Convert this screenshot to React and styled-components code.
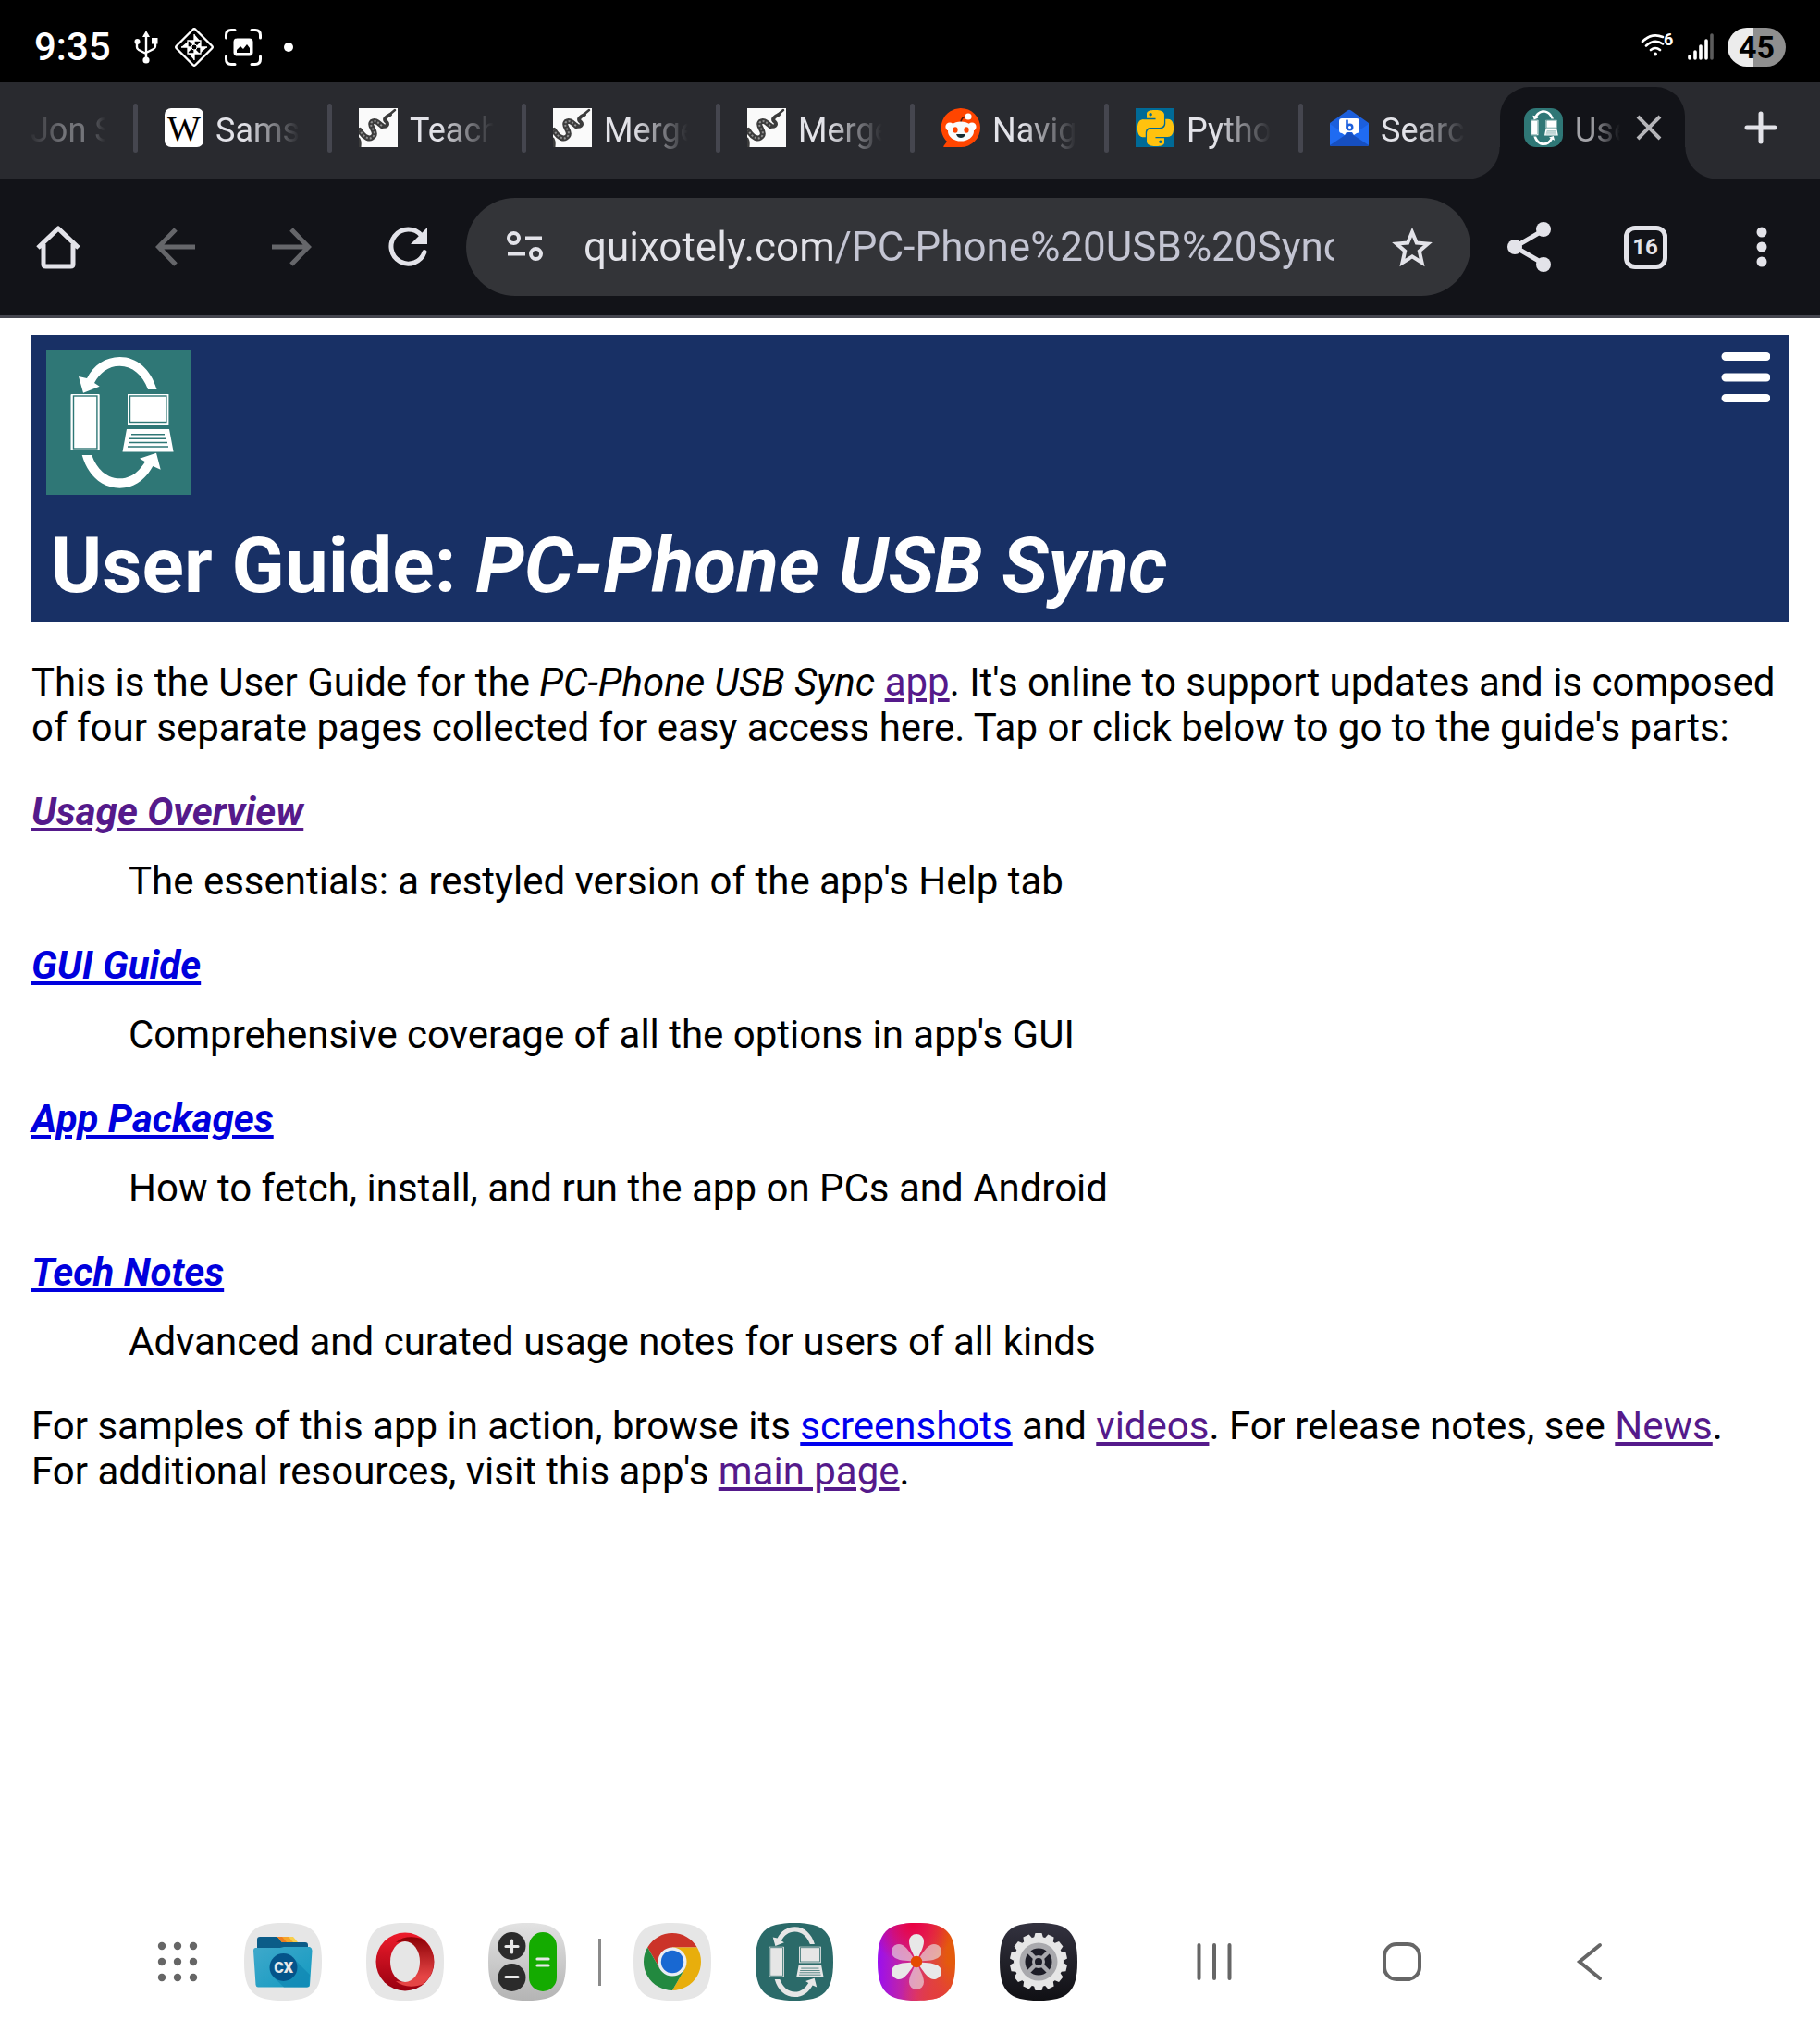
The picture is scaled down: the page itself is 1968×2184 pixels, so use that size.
import React from 'react';
import styled, { createGlobalStyle } from 'styled-components';
import { SiPython } from 'react-icons/si';

const GlobalStyle = createGlobalStyle`
  * {
    box-sizing: border-box;
  }

  body {
    margin: 0;
    background: #ffffff;
    font-family: Roboto, 'Liberation Sans', sans-serif;
  }

  svg {
    display: block;
    flex: none;
  }
`;

const Screen = styled.div`
  min-height: 100vh;
  display: flex;
  flex-direction: column;
`;

const IconButton = styled.button`
  width: ${({ $width }) => $width || 42}px;
  height: ${({ $height }) => $height || 42}px;
  flex: none;
  display: flex;
  align-items: center;
  justify-content: center;
  border: 0;
  padding: 0;
  background: none;
  color: ${({ $color }) => $color || '#e3e3e9'};
  font-family: inherit;
  cursor: pointer;
`;

/* ---------- status bar ---------- */

const StatusBar = styled.header`
  height: 89px;
  padding: 13px 37px 0;
  display: flex;
  align-items: center;
  justify-content: space-between;
  background: #000000;
  color: #ffffff;
`;

const StatusGroup = styled.div`
  display: flex;
  align-items: center;
  gap: ${({ $gap }) => $gap}px;
`;

const Clock = styled.time`
  margin-right: 13px;
  font-size: 42px;
  line-height: 42px;
  font-weight: 500;
`;

const Battery = styled.span`
  width: 63px;
  height: 42px;
  border-radius: 21px;
  background: linear-gradient(90deg, #ececec 45%, #8f8f8f 45%);
  color: #000000;
  font-size: 34px;
  line-height: 42px;
  font-weight: 700;
  text-align: center;
`;

/* ---------- tab strip ---------- */

const TabStrip = styled.nav`
  height: 105px;
  display: flex;
  overflow: hidden;
  background: #292a2f;
`;

const Tabs = styled.div`
  display: flex;
  margin-left: -66px;
`;

const Tab = styled.button`
  width: 210px;
  height: 105px;
  flex: none;
  display: flex;
  align-items: center;
  padding: 0 30px 7px 0;
  border: 0;
  background: none;
  color: #e3e3e9;
  font-family: inherit;
  font-size: 36px;
  line-height: 50px;
  text-align: left;
  opacity: ${({ $faded }) => ($faded ? 0.4 : 1)};

  &::before {
    content: '';
    width: 5px;
    height: 53px;
    margin-right: 29px;
    flex: none;
    border-radius: 3px;
    background: #45464f;
  }
`;

const TabTitle = styled.span`
  flex: 1;
  min-width: 0;
  margin-left: 13px;
  padding: 5px 0 0 ${({ $fadeIn }) => ($fadeIn ? 10 : 0)}px;
  overflow: hidden;
  white-space: nowrap;
  mask-image: linear-gradient(
    90deg,
    ${({ $fadeIn }) =>
      $fadeIn ? 'transparent 8%, #000 50%, #000 80%' : '#000 35%'},
    transparent
  );
`;

const ActiveTab = styled.div`
  position: relative;
  width: 200px;
  height: 100px;
  flex: none;
  display: flex;
  align-items: center;
  margin: 5px 8px 0;
  padding: 0 18px 12px 26px;
  border-radius: 32px 32px 0 0;
  background: #121318;
  color: #a3a3a8;
  font-size: 36px;
  line-height: 50px;

  &::before,
  &::after {
    content: '';
    position: absolute;
    bottom: 0;
    width: 35px;
    height: 35px;
  }

  &::before {
    right: 100%;
    background: radial-gradient(circle at 0 0, transparent 34px, #121318 35px);
  }

  &::after {
    left: 100%;
    background: radial-gradient(circle at 100% 0, transparent 34px, #121318 35px);
  }
`;

const CloseTab = styled(IconButton)`
  margin-left: 10px;
`;

const NewTab = styled(IconButton)`
  margin-left: auto;
  padding-bottom: 7px;
`;

/* ---------- toolbar ---------- */

const Toolbar = styled.div`
  height: 150px;
  display: flex;
  align-items: center;
  padding-bottom: 1px;
  border-bottom: 3px solid #45464f;
  background: #121318;
`;

const Omnibox = styled.form`
  flex: 1;
  min-width: 0;
  height: 106px;
  display: flex;
  align-items: center;
  padding: 0 41px;
  border-radius: 53px;
  background: #333438;
`;

const UrlInput = styled.input`
  flex: 1;
  min-width: 0;
  height: 60px;
  margin: 0 60px 0 40px;
  padding: 0;
  border: 0;
  outline: 0;
  background: linear-gradient(90deg, #e3e3e9 269px, #c4c5d3 269px);
  background-clip: text;
  color: transparent;
  font-family: inherit;
  font-size: 44px;
`;

const TabCount = styled.span`
  width: 47px;
  height: 47px;
  border: 5px solid #e3e3e9;
  border-radius: 12px;
  font-size: 24px;
  line-height: 37px;
  font-weight: 700;
`;

/* ---------- web page ---------- */

const Page = styled.main`
  flex: 1;
  padding: 18px 34px;
  color: #000000;
  font-size: 42px;
  line-height: 49px;
`;

const Banner = styled.header`
  padding: 16px 16px 11px;
  background: #183065;
`;

const BannerTop = styled.div`
  display: flex;
  align-items: flex-start;
  justify-content: space-between;
`;

const Title = styled.h1`
  margin: 28px 0 0 5px;
  color: #ffffff;
  font-size: 84px;
  line-height: 98px;
  font-weight: 700;
`;

const Paragraph = styled.p`
  margin: 41px 0;
`;

const Link = styled.a`
  color: ${({ $visited }) => ($visited ? '#551a8b' : '#0000ee')};
  text-decoration: underline;
`;

const Guide = styled.dl`
  margin: 0 0 42px;
`;

const Part = styled.dt`
  margin-top: 42px;
  font-weight: 700;
  font-style: italic;
`;

const PartLink = styled(Link)`
  color: ${({ $visited }) => ($visited ? '#551a8b' : '#0000dd')};
`;

const PartText = styled.dd`
  margin: 26px 0 0 105px;
`;

/* ---------- dock ---------- */

const Dock = styled.footer`
  height: 126px;
  display: flex;
  align-items: center;
  justify-content: space-between;
  padding: 0 228px 0 168px;
  background: #ffffff;
`;

const DockApps = styled.div`
  display: flex;
  align-items: center;
  gap: 48px;
`;

const DockDivider = styled.span`
  width: 3px;
  height: 51px;
  margin: 0 -13px;
  background: #8a8a8a;
`;

const NavKeys = styled.div`
  display: flex;
  gap: 161px;
`;

/* ---------- drawings ---------- */

const SQUIRCLE = 'M42 0C10 0 0 10 0 42S10 84 42 84 84 74 84 42 74 0 42 0Z';

const SyncLogo = ({ size, shape = 'square', bg = '#2f7776', fg = '#ffffff' }) => (
  <svg width={size} height={size} viewBox="0 0 157 157">
    {shape === 'square' && <rect width="157" height="157" fill={bg} />}
    {shape === 'rounded' && <rect width="157" height="157" rx="48" fill={bg} />}
    {shape === 'squircle' && (
      <path d={SQUIRCLE} transform="scale(1.869)" fill={bg} />
    )}
    <g fill={fg}>
      <path d="M119.5 43C113 21 98 8 79.5 8 64 8 51 17 44 31L35 29 40 46.7 57.7 39.7 52 36C58 25 67 17.7 79.5 17.7 93 17.7 104 27 110 43Z" />
      <path d="M38.7 114C45 136 60 149.7 79.5 149.7 95 149.7 107 141 115.3 126L123.7 129.7 119 111.7 101 117.7 107 121.3C100 132 92 139.3 79.5 139.3 66 139.3 55 130 49.2 114Z" />
      <rect x="26.5" y="48" width="31.2" height="61" rx="1" />
      <rect x="88" y="48" width="44.4" height="33" />
      <path d="M87 86H133L137.6 110.5H82.5Z" />
    </g>
    <g fill="none" stroke={bg} strokeWidth="1.4">
      <rect x="29.5" y="50" width="25.4" height="57" />
      <rect x="90.5" y="50" width="39.4" height="28.5" />
      <path d="M92 91.7H128M90 96.3H130M89 100.5H131M88 105H132" />
    </g>
  </svg>
);

const SnakeIcon = () => (
  <svg width="42" height="42" viewBox="0 0 42 42">
    <rect width="42" height="42" fill="#fafafa" />
    <g fill="none" stroke="#3c3c3c" strokeLinecap="round">
      <path d="M39 2L33 7" strokeWidth="2.5" />
      <path d="M34 7C29 9 26 12 30 15 33 18 29 21 25 19" strokeWidth="4" />
      <path d="M25 19C21 16 18 12 14 15 10 19 20 25 16 30 12 35 6 32 1 24" strokeWidth="6" />
      <path d="M0 33C2 36 1 39 1 42" strokeWidth="3" />
    </g>
    <path
      d="M25 19C21 16 18 12 14 15 10 19 20 25 16 30 12 35 6 32 1 24"
      fill="none"
      stroke="#909090"
      strokeWidth="2"
      strokeDasharray="2 2"
    />
  </svg>
);

const WikiIcon = () => (
  <svg width="42" height="42" viewBox="0 0 42 42">
    <rect width="42" height="42" rx="7" fill="#ffffff" />
    <text
      x="21"
      y="35"
      textAnchor="middle"
      fontFamily="'Liberation Serif', serif"
      fontSize="38"
      fill="#000000"
    >
      W
    </text>
  </svg>
);

const RedditIcon = () => (
  <svg width="42" height="42" viewBox="0 0 42 42">
    <path d="M21 0A21 21 0 1 1 21 42H3C2 42 2 41 3 40L6 36A21 21 0 0 1 21 0Z" fill="#ff4500" />
    <path d="M21 16C21 11 24 9 28 9" fill="none" stroke="#5b1a08" strokeWidth="1.6" />
    <circle cx="29" cy="9" r="3.6" fill="#ffffff" />
    <circle cx="9" cy="20" r="4.6" fill="#ffffff" />
    <circle cx="33" cy="20" r="4.6" fill="#ffffff" />
    <ellipse cx="21" cy="25" rx="14" ry="10.5" fill="#f8fbfc" />
    <ellipse cx="15" cy="23.5" rx="2.6" ry="3.2" fill="#ff4500" />
    <ellipse cx="27" cy="23.5" rx="2.6" ry="3.2" fill="#ff4500" />
    <path d="M16 28H26C25 31 23 32 21 32S17 31 16 28Z" fill="#152c33" />
  </svg>
);

const PythonBox = styled.span`
  width: 42px;
  height: 42px;
  flex: none;
  display: flex;
  align-items: center;
  justify-content: center;
  background: #006a97;
  color: #ffc20e;
`;

const MailIcon = () => (
  <svg width="42" height="42" viewBox="0 0 42 42">
    <path d="M0 16L19 2.5Q21 1 23 2.5L42 16V39Q42 41 40 41H2Q0 41 0 39Z" fill="#1c5fdc" />
    <path d="M0 17L21 31 42 17V39Q42 41 40 41H2Q0 41 0 39Z" fill="#1f6bf2" />
    <path d="M0 40L21 26 42 40Q41 41 40 41H2Q1 41 0 40Z" fill="#164fc0" />
    <path d="M13 11H29Q32 11 32 14V24Q32 27 29 27L26 29 24 26H18L16 29 13 27Q10 27 10 24V14Q10 11 13 11Z" fill="#ffffff" />
    <path d="M18.5 13.5V21" stroke="#1c5fdc" strokeWidth="2.6" strokeLinecap="round" />
    <circle cx="21.5" cy="20.5" r="2.8" fill="none" stroke="#1c5fdc" strokeWidth="2.4" />
  </svg>
);

const UsbIcon = () => (
  <svg width="32" height="36" viewBox="0 0 32 36" fill="none" stroke="#fff" strokeWidth="2.4">
    <path d="M13 6V32M3 12V18Q3 20 5 21L13 25M23 12V17Q23 19 21 20L13 24" />
    <path d="M13 0L17 7H9Z" fill="#fff" stroke="none" />
    <circle cx="3.5" cy="12" r="3" fill="#fff" stroke="none" />
    <rect x="19" y="8" width="6.5" height="6.5" fill="#fff" stroke="none" />
    <circle cx="13" cy="32" r="3.6" fill="#fff" stroke="none" />
  </svg>
);

const DiamondIcon = () => (
  <svg width="42" height="42" viewBox="0 0 42 42">
    <path d="M19.5 2Q21 .5 22.5 2L40 19.5Q41.500 21 40 22.5L22.5 40Q21 41.500 19.5 40L2 22.5Q.5 21 2 19.5Z" fill="none" stroke="#fff" strokeWidth="2.4" />
    <g fill="none" stroke="#fff" strokeWidth="1.3">
      <path d="M21 7V35M7 21H35M14 14H28V28H14Z" />
    </g>
    <path d="M21 7L27 14H21ZM35 21L28 27V21ZM21 35L15 28H21ZM7 21L14 15V21ZM15 14L21 20V14ZM28 15L22 21H28ZM27 28L21 22V28ZM14 27L20 21H14Z" fill="#fff" />
    <circle cx="21" cy="21" r="3" fill="#000" stroke="#fff" strokeWidth="1" />
  </svg>
);

const CaptureIcon = () => (
  <svg width="40" height="40" viewBox="0 0 40 40">
    <path
      d="M1.5 10V7Q1.5 1.5 7 1.5H11M29 1.5H33Q38.5 1.5 38.5 7V10M38.5 30V33Q38.5 38.5 33 38.5H29M11 38.5H7Q1.5 38.5 1.5 33V30"
      fill="none"
      stroke="#fff"
      strokeWidth="3"
      strokeLinecap="round"
    />
    <rect x="9.5" y="10.5" width="21" height="19" rx="4" fill="#fff" />
    <path d="M13 26V23L17 19 20 22 24 17 27 21V26Z" fill="#000" />
  </svg>
);

const MoreDot = () => (
  <svg width="42" height="10" viewBox="0 0 42 10">
    <circle cx="17" cy="5" r="5" fill="#fff" />
  </svg>
);

const WifiIcon = () => (
  <svg width="36" height="30" viewBox="0 0 36 30">
    <g fill="none" stroke="#fff" strokeWidth="2.6" strokeLinecap="round">
      <path d="M2 9Q12 -1 24 4M6 13.5Q15 5.5 24 11.5M11 18Q16 14 21 18" />
    </g>
    <circle cx="16" cy="22.5" r="2" fill="#fff" />
    <text x="25" y="13" fontSize="18" fontWeight="700" fill="#fff">
      6
    </text>
  </svg>
);

const SignalIcon = () => (
  <svg width="28" height="30" viewBox="0 0 28 30" strokeWidth="3.6" strokeLinecap="round">
    <path d="M2 25V27M8 20V27M14 14V27M20 8V27" stroke="#fff" />
    <path d="M26 2V27" stroke="#5c5c5c" />
  </svg>
);

const ToolIcon = ({ name }) => (
  <svg width="54" height="54" viewBox="0 0 54 54" fill="none" stroke="currentColor" strokeWidth="5">
    {name === 'home' && (
      <path d="M5 28L27 7 49 28M11 24V45.5Q11 48 13.5 48H40.5Q43 48 43 45.5V24" strokeLinejoin="round" />
    )}
    {name === 'back' && <path d="M28 8L9.500 27 28 46M9 27H49" />}
    {name === 'forward' && <path d="M27 8L45.5 27 27 46M46 27H6" />}
    {name === 'reload' && (
      <>
        <path d="M41.5 14.5A18.5 18.5 0 1 0 45 32.5" strokeLinecap="round" />
        <path d="M48 6V24H30Z" fill="currentColor" stroke="none" />
      </>
    )}
    {name === 'share' && (
      <>
        <path d="M43 9L12 27 43 45" />
        <g fill="currentColor" stroke="none">
          <circle cx="43" cy="8" r="8" />
          <circle cx="12" cy="27" r="8" />
          <circle cx="43" cy="46" r="8" />
        </g>
      </>
    )}
    {name === 'more' && (
      <g fill="currentColor" stroke="none">
        <circle cx="27" cy="11" r="5.5" />
        <circle cx="27" cy="27" r="5.5" />
        <circle cx="27" cy="43" r="5.5" />
      </g>
    )}
  </svg>
);

const TuneIcon = () => (
  <svg width="46" height="42" viewBox="0 0 46 42" fill="none" stroke="#e3e3e9" strokeWidth="4">
    <circle cx="10.5" cy="11.5" r="5.5" />
    <circle cx="34.5" cy="28.5" r="5.5" />
    <path d="M23 11.5H41M4 28.5H23" />
  </svg>
);

const StarIcon = () => (
  <svg width="46" height="46" viewBox="0 0 46 46">
    <path
      d="M24 7L28.8 18.5 41 19.5 31.8 27.5 34.6 40 24 33.4 13.4 40 16.2 27.5 7 19.5 19.2 18.5Z"
      fill="none"
      stroke="#e3e3e9"
      strokeWidth="4"
    />
  </svg>
);

const CloseIcon = () => (
  <svg width="28" height="28" viewBox="0 0 28 28">
    <path d="M2 2L26 26M26 2L2 26" stroke="#b5b5b9" strokeWidth="4" />
  </svg>
);

const PlusIcon = () => (
  <svg width="36" height="36" viewBox="0 0 36 36">
    <path d="M18 3V33M3 18H33" stroke="#e3e3e9" strokeWidth="5" strokeLinecap="round" />
  </svg>
);

const MenuIcon = () => (
  <svg width="54" height="54" viewBox="0 0 54 54">
    <path d="M6 4.5H50M6 27H50M6 49.5H50" stroke="#fff" strokeWidth="9" strokeLinecap="round" />
  </svg>
);

const FilesApp = () => (
  <svg width="84" height="84" viewBox="0 0 84 84">
    <defs>
      <linearGradient id="folder" x1="0" y1="0" x2="1" y2="1">
        <stop offset="0" stopColor="#3fa9cb" />
        <stop offset="1" stopColor="#1399c0" />
      </linearGradient>
    </defs>
    <path d={SQUIRCLE} fill="#e6e6e6" />
    <path d="M17 15H38L43 21H66Q69 21 69 24V32H14V18Q14 15 17 15Z" fill="#0b5c88" />
    <path d="M36 15H53L58 21H41Z" fill="#f8cf4c" />
    <path d="M36 15H48L53 21H41Z" fill="#f6a52a" />
    <path d="M36 15H41L46 21H41Z" fill="#ee7d20" />
    <path d="M12.5 27H39L43 26H71Q73.5 27 73.5 30L71 67Q71 69.5 68 69.5H15Q13 69.5 12.5 67L10 30Q10 27 12.5 27Z" fill="url(#folder)" />
    <path d="M53 38L71 56 70 67Q70 69.5 68 69.5H43L32 59Z" fill="#0f86b2" opacity="0.7" />
    <circle cx="42.5" cy="48" r="15" fill="#04548a" />
    <text x="42.5" y="54" textAnchor="middle" fontSize="16" fontWeight="900" fill="#e8e8e8">
      CX
    </text>
  </svg>
);

const OperaApp = () => (
  <svg width="84" height="84" viewBox="0 0 84 84">
    <defs>
      <linearGradient id="operaOuter" x1="0" y1="0" x2="0" y2="1">
        <stop offset="0" stopColor="#ee1c2c" />
        <stop offset="1" stopColor="#980010" />
      </linearGradient>
      <linearGradient id="operaInner" x1="0" y1="0" x2="0" y2="1">
        <stop offset="0" stopColor="#8c0005" />
        <stop offset="0.8" stopColor="#e54545" />
      </linearGradient>
    </defs>
    <path d={SQUIRCLE} fill="#e6e6e6" />
    <circle cx="42" cy="42" r="31.5" fill="url(#operaOuter)" />
    <path d="M32 21C40 14 52 14 62 18A31.5 31.5 0 0 1 62 66C52 70 40 70 32 63L42 64V20Z" fill="url(#operaInner)" />
    <ellipse cx="42" cy="42" rx="16" ry="22" fill="#e6e6e6" />
  </svg>
);

const CalculatorApp = () => (
  <svg width="84" height="84" viewBox="0 0 84 84">
    <defs>
      <linearGradient id="calc" x1="0" y1="0" x2="0" y2="1">
        <stop offset="0" stopColor="#e2e2e2" />
        <stop offset="1" stopColor="#b4b4b4" />
      </linearGradient>
    </defs>
    <path d={SQUIRCLE} fill="url(#calc)" />
    <circle cx="25.5" cy="25" r="15" fill="#2b2b2b" />
    <circle cx="25.5" cy="59" r="15" fill="#2b2b2b" />
    <rect x="44" y="10" width="30" height="64" rx="15" fill="#14ab00" />
    <path
      d="M19 25.5H32M25.5 19V32M19 58.5H32M53 39H65M53 46H65"
      stroke="#e8e8e8"
      strokeWidth="3.2"
      strokeLinecap="round"
    />
  </svg>
);

const ChromeApp = () => (
  <svg width="84" height="84" viewBox="0 0 84 84">
    <path d={SQUIRCLE} fill="#e6e6e6" />
    <g transform="translate(42 42)">
      <path d="M-26.85 -15.5A31 31 0 0 1 26.85 -15.5H0L-13.4 7.75Z" fill="#cb3328" />
      <path d="M26.85 -15.5A31 31 0 0 1 0 31L13.4 7.75 0 -15.5Z" fill="#e8ae0c" />
      <path d="M0 31A31 31 0 0 1 -26.85 -15.5L-13.4 7.75 13.4 7.75Z" fill="#22893f" />
      <circle r="15.5" fill="#e9edf2" />
      <circle r="12.2" fill="#1868d2" />
    </g>
  </svg>
);

const PETAL = 'M0 0C-3 -8 -8 -15 -8 -22A8 8 0 0 1 8 -22C8 -15 3 -8 0 0Z';

const GalleryApp = () => (
  <svg width="84" height="84" viewBox="0 0 84 84">
    <defs>
      <linearGradient id="petalBack" x1="0" y1="0.5" x2="1" y2="0.5">
        <stop offset="0" stopColor="#9a0ff0" />
        <stop offset="0.5" stopColor="#d8307a" />
        <stop offset="0.9" stopColor="#e45a0c" />
      </linearGradient>
      <radialGradient id="petalTop" cx="0.45" cy="0" r="0.55">
        <stop offset="0" stopColor="#ea0040" />
        <stop offset="1" stopColor="#ea0040" stopOpacity="0" />
      </radialGradient>
      <radialGradient id="petalBottom" cx="0.8" cy="1" r="0.5">
        <stop offset="0" stopColor="#e43c40" />
        <stop offset="1" stopColor="#e43c40" stopOpacity="0" />
      </radialGradient>
    </defs>
    <path d={SQUIRCLE} fill="url(#petalBack)" />
    <path d={SQUIRCLE} fill="url(#petalTop)" />
    <path d={SQUIRCLE} fill="url(#petalBottom)" />
    <g transform="translate(42 42)" fill="#e8e8e8">
      {[0, 60, 120, 180, 240, 300].map((angle) => (
        <path
          key={angle}
          d={PETAL}
          transform={`rotate(${angle})`}
          opacity={angle % 120 === 0 ? 1 : 0.62}
        />
      ))}
      <circle r="6.2" fill="#e54a00" />
    </g>
  </svg>
);

const SettingsApp = () => (
  <svg width="84" height="84" viewBox="0 0 84 84">
    <defs>
      <linearGradient id="gear" x1="0" y1="0" x2="0" y2="1">
        <stop offset="0" stopColor="#33323f" />
        <stop offset="1" stopColor="#101014" />
      </linearGradient>
    </defs>
    <path d={SQUIRCLE} fill="url(#gear)" />
    <g transform="translate(42 42)">
      <circle r="27" fill="#e6e6e6" />
      {Array.from({ length: 14 }, (_, i) => (
        <path
          key={i}
          d="M-5 -26L-3.5 -31H3.5L5 -26Z"
          transform={`rotate(${(i * 360) / 14})`}
          fill="#e6e6e6"
        />
      ))}
      <circle r="20.5" fill="#a9a9ad" />
      <circle r="14.5" fill="#1d1d27" />
      <path d="M-12 -12L12 12M12 -12L-12 12" stroke="#a9a9ad" strokeWidth="4.5" />
      <circle r="7" fill="#a9a9ad" />
      <circle r="4" fill="#1d1d27" />
    </g>
  </svg>
);

const AppsIcon = () => (
  <svg width="48" height="48" viewBox="0 0 48 48" fill="#666666">
    {[7, 24, 41].map((y) =>
      [7, 24, 41].map((x) => <circle key={`${x}-${y}`} cx={x} cy={y} r="4.2" />)
    )}
  </svg>
);

const NavKeyIcon = ({ name }) => (
  <svg width="42" height="42" viewBox="0 0 42 42" fill="none" stroke="#666666" strokeWidth="4" strokeLinecap="round">
    {name === 'recents' && <path d="M4.5 3V39M21 3V39M37.5 3V39" />}
    {name === 'home' && <rect x="2" y="2" width="38" height="38" rx="13" />}
    {name === 'back' && <path d="M32 3L10 21 32 39" />}
  </svg>
);

/* ---------- data ---------- */

const tabs = [
  { title: 'Sams', icon: <WikiIcon /> },
  { title: 'Teach', icon: <SnakeIcon /> },
  { title: 'Merge', icon: <SnakeIcon /> },
  { title: 'Merge', icon: <SnakeIcon /> },
  { title: 'Navig', icon: <RedditIcon /> },
  {
    title: 'Pytho',
    icon: (
      <PythonBox>
        <SiPython size={39} />
      </PythonBox>
    ),
  },
  { title: 'Searc', icon: <MailIcon /> },
];

const parts = [
  {
    name: 'Usage Overview',
    text: "The essentials: a restyled version of the app's Help tab",
    visited: true,
  },
  { name: 'GUI Guide', text: "Comprehensive coverage of all the options in app's GUI" },
  { name: 'App Packages', text: 'How to fetch, install, and run the app on PCs and Android' },
  { name: 'Tech Notes', text: 'Advanced and curated usage notes for users of all kinds' },
];

const EmptyIcon = styled.span`
  width: 42px;
  flex: none;
`;

const App = () => (
  <Screen>
    <GlobalStyle />
    <StatusBar>
      <StatusGroup $gap={12}>
        <Clock>9:35</Clock>
        <UsbIcon />
        <DiamondIcon />
        <CaptureIcon />
        <MoreDot />
      </StatusGroup>
      <StatusGroup $gap={15}>
        <WifiIcon />
        <SignalIcon />
        <Battery>45</Battery>
      </StatusGroup>
    </StatusBar>

    <TabStrip>
      <Tabs>
        <Tab $faded>
          <EmptyIcon />
          <TabTitle $fadeIn>Jon S</TabTitle>
        </Tab>
        {tabs.map(({ title, icon }, i) => (
          <Tab key={i}>
            {icon}
            <TabTitle>{title}</TabTitle>
          </Tab>
        ))}
        <ActiveTab>
          <SyncLogo size={42} shape="rounded" />
          <TabTitle>Use</TabTitle>
          <CloseTab $width={42} aria-label="Close tab">
            <CloseIcon />
          </CloseTab>
        </ActiveTab>
      </Tabs>
      <NewTab $width={128} $height={105} aria-label="New tab">
        <PlusIcon />
      </NewTab>
    </TabStrip>

    <Toolbar>
      <IconButton $width={126} $height={126} aria-label="Home">
        <ToolIcon name="home" />
      </IconButton>
      <IconButton $width={126} $height={126} $color="#65666a" aria-label="Back">
        <ToolIcon name="back" />
      </IconButton>
      <IconButton $width={126} $height={126} $color="#65666a" aria-label="Forward">
        <ToolIcon name="forward" />
      </IconButton>
      <IconButton $width={126} $height={126} aria-label="Reload">
        <ToolIcon name="reload" />
      </IconButton>
      <Omnibox onSubmit={(e) => e.preventDefault()}>
        <IconButton type="button" $width={46} aria-label="Site settings">
          <TuneIcon />
        </IconButton>
        <UrlInput
          aria-label="Address"
          defaultValue="quixotely.com/PC-Phone%20USB%20Sync"
        />
        <IconButton type="button" $width={46} aria-label="Bookmark">
          <StarIcon />
        </IconButton>
      </Omnibox>
      <IconButton $width={126} $height={126} aria-label="Share">
        <ToolIcon name="share" />
      </IconButton>
      <IconButton $width={126} $height={126}>
        <TabCount>16</TabCount>
      </IconButton>
      <IconButton $width={126} $height={126} aria-label="More">
        <ToolIcon name="more" />
      </IconButton>
    </Toolbar>

    <Page>
      <Banner>
        <BannerTop>
          <SyncLogo size={157} />
          <IconButton $width={62} $height={60} aria-label="Menu">
            <MenuIcon />
          </IconButton>
        </BannerTop>
        <Title>
          User Guide: <em>PC-Phone USB Sync</em>
        </Title>
      </Banner>

      <Paragraph>
        This is the User Guide for the <i>PC-Phone USB Sync</i>{' '}
        <Link href="#app" $visited>
          app
        </Link>
        . It's online to support updates and is composed of four separate pages
        collected for easy access here. Tap or click below to go to the guide's
        parts:
      </Paragraph>

      <Guide>
        {parts.map(({ name, text, visited }) => (
          <React.Fragment key={name}>
            <Part>
              <PartLink href="#part" $visited={visited}>
                {name}
              </PartLink>
            </Part>
            <PartText>{text}</PartText>
          </React.Fragment>
        ))}
      </Guide>

      <Paragraph>
        For samples of this app in action, browse its{' '}
        <Link href="#screenshots">screenshots</Link> and{' '}
        <Link href="#videos" $visited>
          videos
        </Link>
        . For release notes, see{' '}
        <Link href="#news" $visited>
          News
        </Link>
        . For additional resources, visit this app's{' '}
        <Link href="#main" $visited>
          main page
        </Link>
        .
      </Paragraph>
    </Page>

    <Dock>
      <DockApps>
        <IconButton $width={48} aria-label="Apps">
          <AppsIcon />
        </IconButton>
        <IconButton $width={84} $height={84}>
          <FilesApp />
        </IconButton>
        <IconButton $width={84} $height={84}>
          <OperaApp />
        </IconButton>
        <IconButton $width={84} $height={84}>
          <CalculatorApp />
        </IconButton>
        <DockDivider />
        <IconButton $width={84} $height={84}>
          <ChromeApp />
        </IconButton>
        <IconButton $width={84} $height={84}>
          <SyncLogo size={84} shape="squircle" bg="#2b6a69" fg="#e6e6e6" />
        </IconButton>
        <IconButton $width={84} $height={84}>
          <GalleryApp />
        </IconButton>
        <IconButton $width={84} $height={84}>
          <SettingsApp />
        </IconButton>
      </DockApps>
      <NavKeys>
        {['recents', 'home', 'back'].map((name) => (
          <IconButton key={name} aria-label={name}>
            <NavKeyIcon name={name} />
          </IconButton>
        ))}
      </NavKeys>
    </Dock>
  </Screen>
);

export default App;
